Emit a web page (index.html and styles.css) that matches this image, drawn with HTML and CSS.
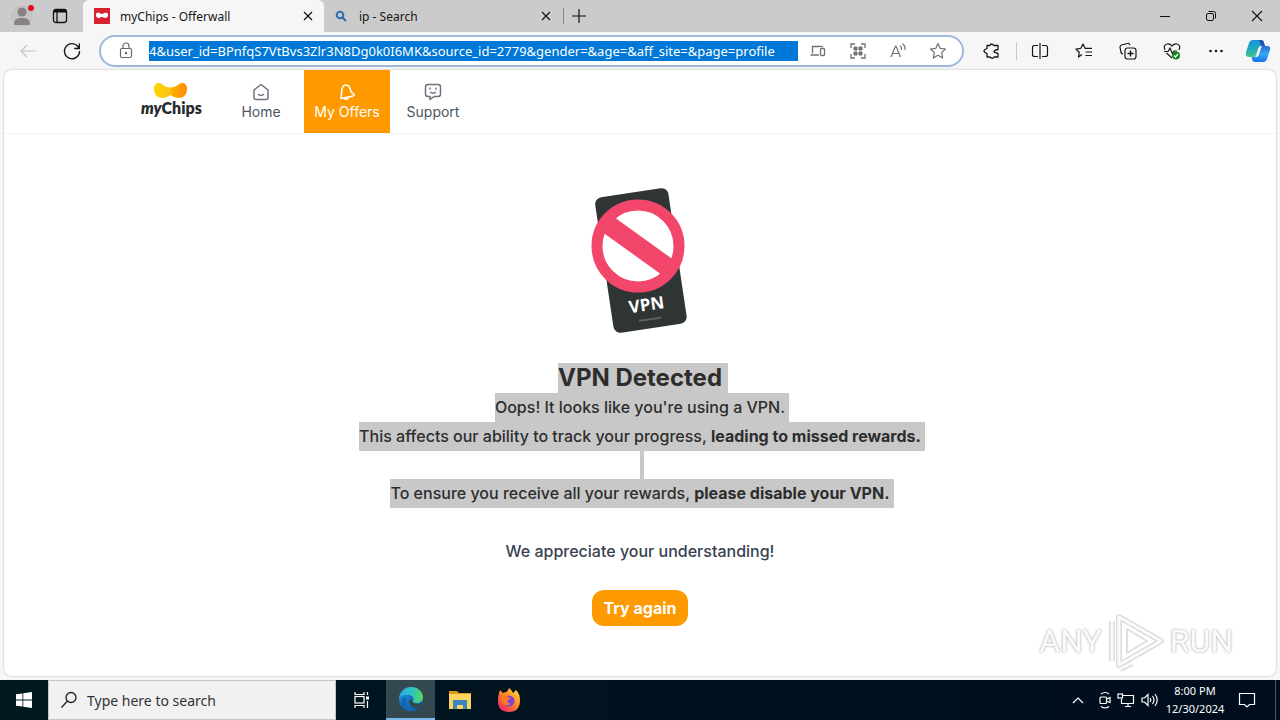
FILE: index.html
```html
<!DOCTYPE html>
<html lang="en">
<head>
<meta charset="utf-8">
<title>myChips - Offerwall</title>
<link rel="stylesheet" href="styles.css">
</head>
<body>
<div class="desktop">
  <header class="tabstrip">
    <div class="strip-tools">
      <button class="icon-btn profile" aria-label="Profile">
        <svg width="32" height="32" viewBox="0 0 32 32"><circle cx="16" cy="16" r="11" fill="#c3c3c3"/><circle cx="16" cy="12" r="4.5" fill="#868280"/><path d="M8 25c0-6 3-7 8-7s8 1 8 7z" fill="#868280"/><circle cx="25" cy="8" r="3" fill="#e3101c"/></svg>
      </button>
      <button class="icon-btn" aria-label="Tab actions">
        <svg width="16" height="16" viewBox="0 0 16 16" fill="none" stroke="#111" stroke-width="1.3"><rect x="1.5" y="1.5" width="13" height="13" rx="2.5"/><path d="M2 3h12" stroke-width="3"/><path d="M5 4v10"/></svg>
      </button>
    </div>
    <div class="tab tab-active">
      <svg class="favicon" width="16" height="16" viewBox="0 0 16 16"><rect width="16" height="16" fill="#d92231"/><path d="M2 7c0-3 2.500-2.500 6-.8 3.500-1.700 6-2.200 6 .8 0 3.500-3.500 3.500-6 1.800C5.500 10.500 2 10.500 2 7z" fill="#fff"/></svg>
      <span class="tab-title">myChips - Offerwall</span>
      <button class="icon-btn close" aria-label="Close tab"><svg width="10" height="10" viewBox="0 0 10 10" stroke="#111" stroke-width="1.2"><path d="M1 1l8 8M9 1L1 9"/></svg></button>
    </div>
    <div class="tab">
      <svg class="favicon" width="16" height="16" viewBox="0 0 16 16" fill="none" stroke="#2d70ad"><circle cx="7" cy="7" r="3.300" stroke-width="2"/><path d="M9.500 9.500l3.500 3.500" stroke-width="2.200"/></svg>
      <span class="tab-title">ip - Search</span>
      <button class="icon-btn close" aria-label="Close tab"><svg width="10" height="10" viewBox="0 0 10 10" stroke="#111" stroke-width="1.100"><path d="M1 1l8 8M9 1L1 9"/></svg></button>
    </div>
    <button class="icon-btn new-tab" aria-label="New tab"><svg width="14" height="14" viewBox="0 0 14 14" stroke="#111" stroke-width="1.200"><path d="M7 0v14M0 7h14"/></svg></button>
    <div class="window-controls">
      <button class="icon-btn" aria-label="Minimize"><svg width="12" height="12" viewBox="0 0 12 12" stroke="#111"><path d="M1 6.500h10"/></svg></button>
      <button class="icon-btn" aria-label="Restore"><svg width="12" height="12" viewBox="0 0 12 12" fill="none" stroke="#111"><rect x="1.500" y="3.500" width="7" height="7" rx="1.500"/><path d="M3.500 1.500h5q2 0 2 2v5"/></svg></button>
      <button class="icon-btn" aria-label="Close window"><svg width="12" height="12" viewBox="0 0 12 12" stroke="#111" stroke-width="1.100"><path d="M1 1l10 10M11 1L1 11"/></svg></button>
    </div>
  </header>

  <div class="toolbar">
    <div class="nav-buttons">
      <button class="icon-btn" aria-label="Back"><svg width="20" height="20" viewBox="0 0 20 20" fill="none" stroke="#c4c4c4" stroke-width="1.200"><path d="M18 10H3M9 4l-6 6 6 6"/></svg></button>
      <button class="icon-btn" aria-label="Refresh"><svg width="20" height="20" viewBox="0 0 20 20" fill="none" stroke="#161616" stroke-width="1.400"><path d="M17 7.500A7.500 7.500 0 1 0 17.500 10M17.300 2.500v5h-5"/></svg></button>
    </div>
    <div class="address">
      <svg class="lock" width="16" height="18" viewBox="0 0 16 18" fill="none" stroke="#666" stroke-width="1.200"><rect x="2.500" y="6.500" width="11" height="9" rx="1.500"/><path d="M5 6V4a3 3 0 0 1 6 0v2"/><circle cx="8" cy="11" r=".6"/></svg>
      <input class="url" type="text" aria-label="Address" value="4&amp;user_id=BPnfqS7VtBvs3Zlr3N8Dg0k0I6MK&amp;source_id=2779&amp;gender=&amp;age=&amp;aff_site=&amp;page=profile">
      <div class="address-tools">
        <button class="icon-btn" aria-label="Send to device"><svg width="18" height="18" viewBox="0 0 18 18" fill="none" stroke="#707070" stroke-width="1.300"><path d="M10 4.500H3.500v7M1.500 13H10"/><rect x="11.500" y="6.500" width="4" height="7" rx="1"/><path d="M10 4.500h4"/></svg></button>
        <button class="icon-btn" aria-label="QR code"><svg width="18" height="18" viewBox="0 0 18 18" fill="none" stroke="#707070"><path d="M2 6V2h4M12 2h4v4M16 12v4h-4M6 16H2v-4" stroke-width="1.300"/><path d="M5 5h3v3H5zM10 5h3v3h-3zM5 10h3v3H5zM10 10h3v3h-3z" fill="#707070"/></svg></button>
        <button class="icon-btn" aria-label="Read aloud"><svg width="18" height="18" viewBox="0 0 18 18" fill="none" stroke="#707070" stroke-width="1.200"><path d="M2 15L6.500 4h.5l4.500 11M3.500 11.500h6.500M11 3.500q2 1.500 1.500 4.500M13.500 1.500q3 2.500 2.500 6.500"/></svg></button>
        <button class="icon-btn" aria-label="Add to favorites"><svg width="18" height="18" viewBox="0 0 18 18" fill="none" stroke="#707070" stroke-width="1.200" stroke-linejoin="round"><path d="M9 1.500l2.300 4.900 5.200.6-3.900 3.600 1.100 5.400L9 13.300 4.300 16l1.100-5.400L1.500 7l5.200-.6z"/></svg></button>
      </div>
    </div>
    <div class="toolbar-actions">
      <button class="icon-btn slim" aria-label="Extensions"><svg width="18" height="18" viewBox="0 0 18 18" fill="none" stroke="#171717" stroke-width="1.300" stroke-linejoin="round"><path d="M4 3.500h3q1-3 4 0h4v4q-4 1-4 2t4 2v3.500h-4q-1.500 2.500-4 0H4v-3.500q-3-1-3-2.500t3-2.500z"/></svg></button>
      <span class="divider"></span>
      <button class="icon-btn" aria-label="Split screen"><svg width="18" height="18" viewBox="0 0 18 18" fill="none" stroke="#171717" stroke-width="1.200"><path d="M7 3.500H3.500q-2 0-2 2v7q0 2 2 2H7M11 3.500h3.500q2 0 2 2v7q0 2-2 2H11M9 1v16"/></svg></button>
      <button class="icon-btn" aria-label="Favorites"><svg width="18" height="18" viewBox="0 0 18 18" fill="none" stroke="#171717" stroke-width="1.200" stroke-linejoin="round"><path d="M7 12.500L3.500 15l.8-4.500L1 7l4.800-.7L8 2l2 4.300h7M10.500 10H17M10.500 13.500H17"/></svg></button>
      <button class="icon-btn" aria-label="Collections"><svg width="18" height="18" viewBox="0 0 18 18" fill="none" stroke="#171717" stroke-width="1.200"><path d="M4 12q-1.500 0-2-1.500L1 5q0-1.500 1.500-2l6-1.500Q10 1 11 3"/><rect x="6" y="6" width="11" height="11" rx="2.500"/><path d="M11.500 8.500v6M8.500 11.500h6" stroke-width="1.400"/></svg></button>
      <button class="icon-btn" aria-label="Browser essentials"><svg width="18" height="18" viewBox="0 0 18 18" fill="none" stroke="#171717" stroke-width="1.200"><path d="M2 8Q0 3 4 2q3-.5 5 2 2-2.500 5-2 4 1 2 6M3.500 11L9 16M1 9.500h4L7 6l2.500 6L11 9h3"/><circle cx="13" cy="13.500" r="4" fill="#16851b" stroke="none"/><path d="M11 13.500l1.500 1.500 2.500-3" stroke="#fff"/></svg></button>
      <button class="icon-btn" aria-label="Settings and more"><svg width="18" height="18" viewBox="0 0 18 18" fill="#171717"><circle cx="3.500" cy="9" r="1.300"/><circle cx="9" cy="9" r="1.300"/><circle cx="14.500" cy="9" r="1.300"/></svg></button>
      <button class="icon-btn copilot" aria-label="Copilot"><svg width="26" height="24" viewBox="0 0 26 24"><defs><linearGradient id="ca" x1="0" y1="0" x2="0" y2="1"><stop stop-color="#1593da"/><stop offset=".5" stop-color="#20a9bf"/><stop offset="1" stop-color="#42c88a"/></linearGradient><linearGradient id="cb" x1="0" y1="0" x2="0" y2="1"><stop stop-color="#2668d2"/><stop offset=".5" stop-color="#36a9f3"/><stop offset="1" stop-color="#1274ea"/></linearGradient></defs><path d="M8 1h8q2.500 0 3 3l1 3h-3q-3 0-4 3l-2 6q-1 2-3 2H4q-4 0-3-5l3-9q1-3 4-3z" fill="url(#ca)"/><path d="M18 23h-8q-2.500 0-3-3l-.5-2H8q3 0 4-3l3-6q1-2 3-2h4q4 0 3 4l-3 9q-1 3-4 3z" fill="url(#cb)"/><path d="M13 1h3q2.500 0 3 3l1 3h-4q-1-5-3-6z" fill="#1c54b8"/><path d="M11.500 16l3-8.500h2.200l-3.200 9q-.8 1.500-2.500 1.500h-1q1-.5 1.500-2z" fill="#f6f6f6"/></svg></button>
    </div>
  </div>

  <div class="page">
    <nav class="site-nav">
      <div class="nav-inner">
        <a class="logo" href="#" aria-label="myChips">
          <svg width="62" height="40" viewBox="0 0 62 40"><defs><linearGradient id="lg"><stop stop-color="#ffd500"/><stop offset=".48" stop-color="#ffc313"/><stop offset=".55" stop-color="#ffb000"/><stop offset="1" stop-color="#ff8a00"/></linearGradient></defs><path d="M13 7c0-7 6-7 9-4q7 5 15 0c3-3 9-3 9 4 0 10-10 11-16.500 6C23 18 13 17 13 7z" fill="url(#lg)"/><text x="0" y="32" class="logo-text"><tspan class="logo-my">my</tspan>Chips</text></svg>
        </a>
        <a class="nav-item" href="#">
          <svg width="18" height="18" viewBox="0 0 18 18" fill="none" stroke="#6b7280" stroke-width="1.500" stroke-linejoin="round"><path d="M2 7l7-5.500L16 7v7.500q0 2-2 2H4q-2 0-2-2zM6 11q3 3 6 0"/></svg>
          <span>Home</span>
        </a>
        <a class="nav-item current" href="#">
          <svg width="18" height="18" viewBox="0 0 18 18" fill="none" stroke="#fff" stroke-width="1.600" stroke-linejoin="round"><path d="M3 15.500L4 6Q5 1.500 8.500 2q2.500.5 3.500 3.500l1.200 3.500 3 2.500-1 1.500zM6.500 15.500q2 2.500 4-1.200"/></svg>
          <span>My Offers</span>
        </a>
        <a class="nav-item" href="#">
          <svg width="18" height="18" viewBox="0 0 18 18" fill="none" stroke="#6b7280" stroke-width="1.500" stroke-linejoin="round"><path d="M4 1.500h10q2.500 0 2.500 2.500v7q0 2.500-2.500 2.500h-4L6 16.500v-3H4q-2.500 0-2.500-2.500V4q0-2.500 2.500-2.500zM6 4.500v2M12 4.500v2M6 9q3 2.500 6 0"/></svg>
          <span>Support</span>
        </a>
      </div>
    </nav>
    <main class="notice">
      <svg class="vpn-art" width="100" height="150" viewBox="0 0 100 150" role="img" aria-label="VPN blocked">
        <g transform="rotate(-8.500 51 76)"><rect x="14" y="7" width="74" height="137" rx="7" fill="#2f3535"/><rect x="40" y="134" width="23" height="2" rx="1" fill="#5b6060"/><text x="50" y="126" class="vpn-text">VPN</text></g>
        <circle cx="48" cy="61" r="41" fill="#fff" stroke="#f2476a" stroke-width="11"/>
        <path d="M16 38L80 84" stroke="#f2476a" stroke-width="19"/>
      </svg>
      <h1 class="headline"><span class="marked wide">VPN Detected</span></h1>
      <p class="line"><span class="marked">Oops! It looks like you're using a VPN.</span></p>
      <p class="line"><span class="marked">This affects our ability to track your progress, <b>leading to missed rewards.</b></span></p>
      <p class="line blank"><span class="marked"></span></p>
      <p class="line"><span class="marked">To ensure you receive all your rewards, <b>please disable your VPN.</b></span></p>
      <p class="line thanks">We appreciate your understanding!</p>
      <button class="retry">Try again</button>
    </main>
  </div>

  <div class="watermark">
    <span>ANY</span>
    <svg width="60" height="64" viewBox="0 0 60 64" fill="none" stroke-linejoin="round"><g stroke="#dcdcdc" stroke-width="6"><path d="M13 8L55 32 13 56zM6 12v40M14 60l12-6"/></g><g stroke="#fafafa" stroke-width="3"><path d="M13 8L55 32 13 56zM6 12v40M14 60l12-6"/></g><path d="M21 20l20 12-20 12z" stroke="#dedede" stroke-width="2"/></svg>
    <span>RUN</span>
  </div>

  <footer class="taskbar">
    <button class="task start" aria-label="Start"><svg width="16" height="16" viewBox="0 0 16 16" fill="#fff"><path d="M0 2.300l6.500-.9v6.200H0zM7.300 1.300L16 0v7.600H7.300zM0 8.400h6.500v6.200L0 13.700zM7.300 8.400H16V16l-8.700-1.300z"/></svg></button>
    <div class="search">
      <svg width="18" height="18" viewBox="0 0 18 18" fill="none" stroke="#222" stroke-width="1.300"><circle cx="11" cy="6.500" r="5"/><path d="M7.500 10L1.500 16.500"/></svg>
      <input class="search-input" type="text" aria-label="Search" placeholder="Type here to search">
    </div>
    <button class="task" aria-label="Task view"><svg width="18" height="18" viewBox="0 0 18 18" fill="none" stroke="#fff" stroke-width="1.200"><path d="M2 1v2.500h9V1M2 17v-2.500h9V17M14.500 1v3M14.500 10v7"/><rect x="2" y="5.500" width="9" height="6.500"/><path d="M13 7h3" stroke-width="3"/></svg></button>
    <button class="task open" aria-label="Microsoft Edge"><svg width="26" height="26" viewBox="0 0 26 26"><defs><linearGradient id="ea" x1="0" x2="1"><stop stop-color="#2ba9df"/><stop offset=".55" stop-color="#2fc4c4"/><stop offset="1" stop-color="#5bd750"/></linearGradient><linearGradient id="eb" x1="0" y1="0" x2="1" y2="1"><stop stop-color="#1b9be4"/><stop offset="1" stop-color="#0d4f9c"/></linearGradient></defs><circle cx="13" cy="13" r="12" fill="url(#eb)"/><path d="M1 12C3 4 8 1 13 1c7 0 12 5 12 10 0 4-3 6-6 6-3 0-5-1-4-2.500 2-3-1-5.500-5-5.500-4 0-7 0-9 3z" fill="url(#ea)"/><path d="M14.500 14c-1 2 2 4 5 4 2 0 3-.5 4-1-1 3-3 5-5 5-6 0-9-5-6-9z" fill="#344850"/><path d="M9 11q-3 6 2 11 4 3 8 1.500Q11 28 4 21 0 13 9 11z" fill="#1465b2"/></svg></button>
    <button class="task" aria-label="File Explorer"><svg width="24" height="22" viewBox="0 0 24 22"><path d="M1 2h8l2 2h12v5H1z" fill="#e09a1d"/><path d="M1 5h22v15H1z" fill="#fcd45f"/><path d="M5 20v-8q0-1 1-1h12q1 0 1 1v8h-4v-4H9v4z" fill="#3688bf"/></svg></button>
    <button class="task" aria-label="Firefox"><svg width="26" height="26" viewBox="0 0 26 26"><defs><linearGradient id="fa" x1="1" y1="0" x2=".2" y2="1"><stop stop-color="#ffe34a"/><stop offset=".5" stop-color="#ff8a1f"/><stop offset="1" stop-color="#f0246c"/></linearGradient></defs><path d="M3 6l1-3 3 3 3-1q2-1 3-4 3 2 4 5l3-3q4 4 4 10 0 12-11 12T2 14q0-5 1-8z" fill="url(#fa)"/><circle cx="13" cy="14" r="5.500" fill="#7b45d8"/><path d="M5 9q4-2 7 1l3 1-4 3q1 3 4 2-3 4-7 1-3-3-3-8z" fill="#ff7a25"/></svg></button>
    <div class="tray">
      <svg width="12" height="8" viewBox="0 0 12 8" fill="none" stroke="#fff" stroke-width="1.200"><path d="M1 7l5-5 5 5"/></svg>
      <svg width="12" height="18" viewBox="0 0 12 18" fill="none" stroke="#fff" stroke-width="1.200"><rect x="1" y="6" width="6.500" height="6.500" rx="1"/><path d="M8 8l3-1.500v5L8 10.500M2 3q4-3 8 0M2 15.500q4 3 8 0"/></svg>
      <svg width="18" height="16" viewBox="0 0 18 16" fill="none" stroke="#fff" stroke-width="1.200"><path d="M6 3.500h10.500v8H4.500V7M11 11.500v3M8 14.500h6"/><rect x="1" y="2" width="4.500" height="4"/></svg>
      <svg width="18" height="16" viewBox="0 0 18 16" fill="none" stroke="#fff" stroke-width="1.200"><path d="M1 6h2.500L7 2.500v11L3.500 10H1zM9 6q1.500 2 0 4M11.500 4q3 4 0 8M14 2q4.500 6 0 12"/></svg>
      <div class="clock"><time>8:00 PM</time><time>12/30/2024</time></div>
      <button class="icon-btn notify" aria-label="Notifications"><svg width="18" height="18" viewBox="0 0 18 18" fill="none" stroke="#fff" stroke-width="1.200"><path d="M1.500 2.500h15v11h-5L9 16l-2.500-2.500h-5z"/></svg></button>
      <span class="peek"></span>
    </div>
  </footer>
</div>
</body>
</html>
```

FILE: styles.css
```css
* { box-sizing: border-box; }
body { margin: 0; font-family: "Noto Sans", "Open Sans", sans-serif; }
button { border: 0; padding: 0; background: none; font: inherit; color: inherit; }
svg { display: block; flex: none; }
a { color: inherit; text-decoration: none; }

.desktop { position: relative; display: flex; flex-direction: column; min-height: 100vh; background: #f6f6f6; }
.icon-btn { display: flex; align-items: center; justify-content: center; flex: none; }

/* Browser tabs */
.tabstrip { display: flex; align-items: stretch; height: 32px; background: #cbcbcb; }
.strip-tools { display: flex; align-items: center; width: 83px; padding-left: 6px; gap: 14px; flex: none; }
.tab { display: flex; align-items: center; width: 239px; padding: 0 12px 0 9px; gap: 10px; font-size: 12px; color: #151515; }
.tab-active { width: 241px; padding: 0 11px; background: #f6f6f6; border-radius: 6px 6px 0 0; }
.tab-title { flex: 1; white-space: nowrap; }
.new-tab { width: 30px; border-left: 1px solid #858585; margin: 8px 0; }
.tab .close { width: 10px; }
.window-controls { display: flex; margin-left: auto; }
.window-controls .icon-btn { width: 46px; }

/* Browser toolbar */
.toolbar { display: flex; align-items: center; height: 38px; }
.nav-buttons { display: flex; align-items: center; width: 99px; padding-left: 18px; gap: 24px; flex: none; }
.address { display: flex; align-items: center; flex: 1; min-width: 0; height: 32px; padding: 0 4px 0 17px; background: #fff; border: 2px solid #9fb8dc; border-radius: 16px; }
.lock { margin-right: 15px; }
.url { flex: 1; min-width: 0; height: 20px; padding: 0; border: 0; background: #0078d7; color: #fff; font: 13px/20px "Noto Sans", sans-serif; }
.address-tools { display: flex; }
.address-tools .icon-btn { width: 40px; }
.toolbar-actions { display: flex; align-items: center; padding: 0 2px 0 9px; flex: none; }
.toolbar-actions .icon-btn { width: 44px; }
.toolbar-actions .slim { width: 38px; }
.toolbar-actions .copilot { width: 40px; }
.divider { width: 1px; height: 18px; margin: 0 1px 0 5px; background: #c8c8c8; }

/* Site */
.page { flex: 1; margin: 0 4px 4px; background: #fff; border-radius: 8px; box-shadow: 0 0 2px #aaa; font-family: Inter, sans-serif; overflow: hidden; }
.site-nav { border-bottom: 1px solid #f1f1f3; }
.nav-inner { display: flex; align-items: stretch; max-width: 1024px; height: 63px; margin: 0 auto; padding-left: 13px; }
.logo { display: flex; align-items: center; width: 77px; }
.logo-text { font: 800 16px Lato, sans-serif; fill: #262b30; }
.logo-my { font-style: italic; }
.nav-item { display: flex; flex-direction: column; align-items: center; justify-content: center; width: 86px; padding-top: 2px; gap: 1px; font-size: 14px; line-height: 20px; color: #4b5563; }
.nav-item.current { background: #ff9900; color: #fff; }
.notice { display: flex; flex-direction: column; align-items: center; padding: 51px 16px 40px; text-align: center; }
.vpn-art { margin-bottom: 28px; }
.vpn-text { font: 700 17px "Open Sans", sans-serif; fill: #fff; text-anchor: middle; }
.headline { margin: 0; font-size: 24px; line-height: 30px; font-weight: 700; }
.line { margin: 0; font-size: 16px; line-height: 29px; font-weight: 500; color: #374151; }
.line b { font-weight: 700; }
.marked { display: inline-block; vertical-align: top; margin-right: -4px; padding-right: 4px; background: #c8c8c8; color: #2d2d2d; }
.marked.wide { margin-right: -6px; padding-right: 6px; }
.blank { height: 28px; }
.blank .marked { height: 28px; }
.thanks { margin: 29px 0 24px; }
.retry { height: 36px; padding: 0 12px; border-radius: 12px; background: #ff9900; color: #fff; font-size: 16px; font-weight: 700; }

.watermark { position: absolute; right: 47px; bottom: 47px; display: flex; align-items: center; gap: 4px; font: 400 32px Roboto, sans-serif; color: #fbfbfb; text-shadow: 0 0 2px #b5b5b5, 0 0 3px #c8c8c8; pointer-events: none; }

/* Taskbar */
.taskbar { display: flex; align-items: stretch; height: 40px; background: linear-gradient(90deg, #001820, #00101e 70%, #000c1c); color: #fff; }
.task { display: flex; align-items: center; justify-content: center; width: 49px; flex: none; }
.task.start { width: 48px; }
.task.open { background: #344850; border-bottom: 2px solid #76b9ed; }
.search { display: flex; align-items: center; width: 288px; margin-right: 1px; padding-left: 11px; gap: 9px; background: #f1f1f1; border: 1px solid #c4c4c4; }
.search-input { flex: 1; min-width: 0; padding: 0; border: 0; background: none; font: 14px "Noto Sans", sans-serif; color: #333; }
.search-input::placeholder { color: #333; opacity: 1; }
.tray { display: flex; align-items: center; gap: 6px; margin-left: auto; }
.tray > svg:first-child { margin-right: 9px; }
.clock { display: flex; flex-direction: column; align-items: center; width: 60px; font: 11px/18px "Noto Sans", sans-serif; }
.notify { width: 32px; margin-right: 6px; }
.peek { align-self: stretch; width: 5px; border-left: 1px solid #4a5563; }
```
